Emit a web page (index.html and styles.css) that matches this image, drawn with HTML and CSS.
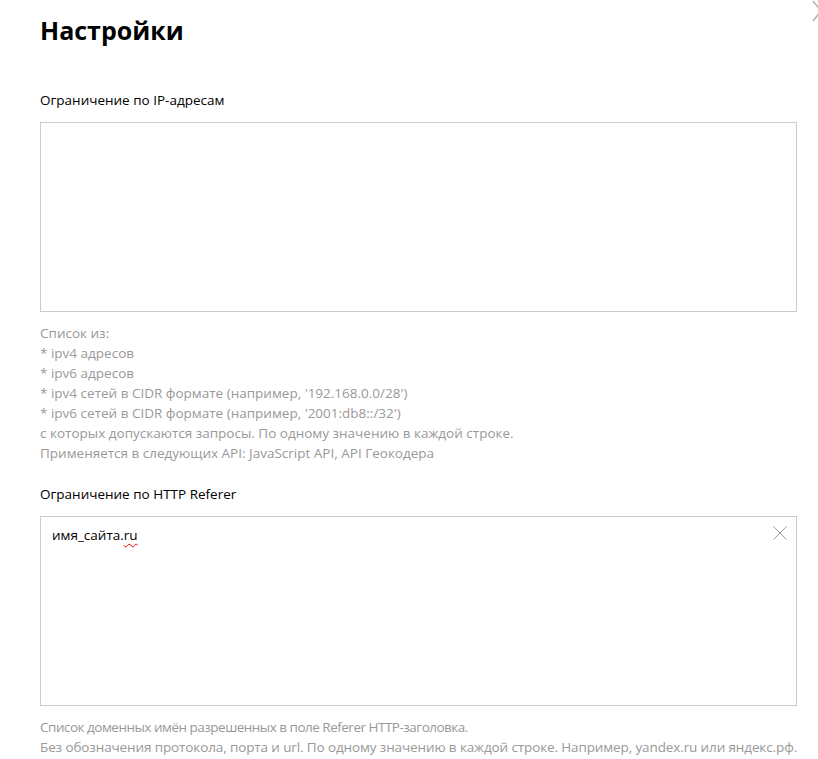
FILE: index.html
```html
<!DOCTYPE html>
<html>
<head>
	<meta charset="UTF-8">
	<title>Настройки</title>
	<link rel="stylesheet" href="styles.css">
</head>
<body>
	<svg class="next" width="10" height="22" viewBox="0 0 10 22">
		<path d="M1 1 L9 11 L1 21" fill="none" stroke="#b3b3b3" stroke-width="1.5"/>
	</svg>

	<div class="page">
		<h1>Настройки</h1>

		<div class="field">
			<label class="field-label">Ограничение по IP-адресам</label>
			<div class="box box-ip"></div>
			<div class="hint">
				Список из:<br>
				* ipv4 адресов<br>
				* ipv6 адресов<br>
				* ipv4 сетей в CIDR формате (например, '192.168.0.0/28')<br>
				* ipv6 сетей в CIDR формате (например, '2001:db8::/32')<br>
				с которых допускаются запросы. По одному значению в каждой строке.<br>
				Применяется в следующих API: JavaScript API, API Геокодера
			</div>
		</div>

		<div class="field">
			<label class="field-label">Ограничение по HTTP Referer</label>
			<div class="box box-referer">
				<span class="value">имя_сайта.<span class="typo">ru</span></span>
				<svg class="clear" width="14" height="14" viewBox="0 0 14 14">
					<path d="M0.5 0.5 L13.5 13.5 M13.5 0.5 L0.5 13.5" stroke="#999" stroke-width="1"/>
				</svg>
			</div>
			<div class="hint hint-narrow">
				<div class="hint-line tight">Список доменных имён разрешенных в поле Referer HTTP-заголовка.</div>
				<div class="hint-line">Без обозначения протокола, порта и url. По одному значению в каждой строке. Например, yandex.ru или яндекс.рф.</div>
			</div>
		</div>
	</div>
</body>
</html>
```

FILE: styles.css
```css
body {
	margin: 0;
	background-color: #fff;
	font-family: "Open Sans", Arial, sans-serif;
	color: #000;
	overflow: hidden;
}

.page {
	padding: 14px 21px 0 40px;
}

h1 {
	margin: 0 0 44px 0;
	font-size: 25px;
	font-weight: bold;
	line-height: 32px;
}

.next {
	position: absolute;
	top: 0;
	right: -4px;
}

.field {
	margin-bottom: 21px;
}

.field-label {
	display: block;
	font-size: 13.5px;
	line-height: 20px;
	margin-bottom: 12px;
}

.box {
	box-sizing: border-box;
	border: 1px solid #ccc;
	background-color: #fff;
	width: 757px;
	height: 190px;
}

.box-referer {
	position: relative;
	padding: 8px 11px;
	font-size: 13.5px;
	line-height: 20px;
}

.typo {
	text-decoration: underline wavy #e00;
	text-decoration-thickness: 1px;
	text-underline-offset: 3px;
}

.clear {
	position: absolute;
	top: 9px;
	right: 9px;
}

.hint {
	margin-top: 11px;
	font-size: 13.5px;
	line-height: 20px;
	color: #999;
}

.hint-line {
	white-space: nowrap;
	letter-spacing: -0.12px;
}

.hint-line.tight {
	letter-spacing: -0.5px;
}
```
